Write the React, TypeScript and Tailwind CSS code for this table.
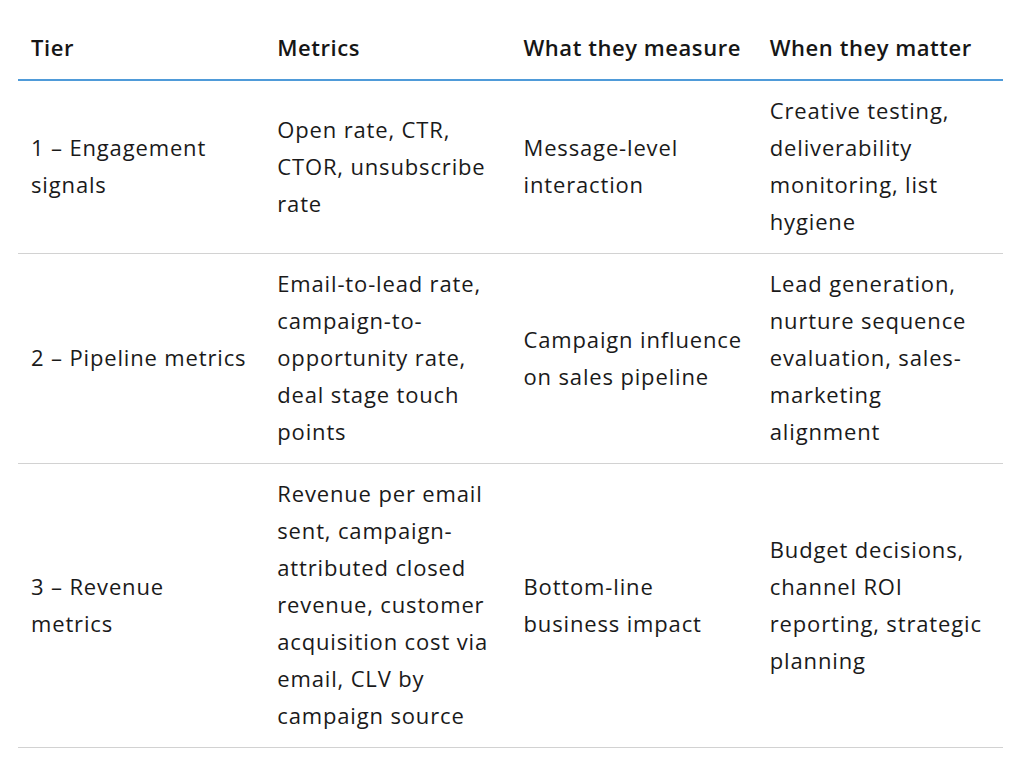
import React from "react";

const rows: { cells: string[][] }[] = [
  {
    cells: [
      ["1 – Engagement", "signals"],
      ["Open rate, CTR,", "CTOR, unsubscribe", "rate"],
      ["Message-level", "interaction"],
      ["Creative testing,", "deliverability", "monitoring, list", "hygiene"],
    ],
  },
  {
    cells: [
      ["2 – Pipeline metrics"],
      ["Email-to-lead rate,", "campaign-to-", "opportunity rate,", "deal stage touch", "points"],
      ["Campaign influence", "on sales pipeline"],
      ["Lead generation,", "nurture sequence", "evaluation, sales-", "marketing", "alignment"],
    ],
  },
  {
    cells: [
      ["3 – Revenue", "metrics"],
      [
        "Revenue per email",
        "sent, campaign-",
        "attributed closed",
        "revenue, customer",
        "acquisition cost via",
        "email, CLV by",
        "campaign source",
      ],
      ["Bottom-line", "business impact"],
      ["Budget decisions,", "channel ROI", "reporting, strategic", "planning"],
    ],
  },
];

const headers = ["Tier", "Metrics", "What they measure", "When they matter"];

export default function App() {
  return (
    <div
      className="w-[1024px] h-[766px] bg-white pt-[18px] px-[18px]"
      style={{ fontFamily: '"Open Sans", "Noto Sans", sans-serif' }}
    >
      <table className="w-[985px] table-fixed border-collapse text-[22px] leading-[37px] text-[#1a1a1a] tracking-[0.85px]">
        <thead>
          <tr className="border-b-2 border-[#4f9bd9]">
            {headers.map((h) => (
              <th
                key={h}
                className="w-1/4 text-left font-semibold text-[#161616] px-[13px] pt-[11px] pb-[13px] whitespace-nowrap tracking-[0.55px]"
              >
                {h}
              </th>
            ))}
          </tr>
        </thead>
        <tbody>
          {rows.map((r, i) => (
            <tr key={i} className="border-b border-[#d2d2d2]">
              {r.cells.map((lines, j) => (
                <td key={j} className="align-middle px-[13px] pt-[11px] pb-[13px]">
                  {lines.map((l, k) => (
                    <div key={k} className="whitespace-nowrap">
                      {l}
                    </div>
                  ))}
                </td>
              ))}
            </tr>
          ))}
        </tbody>
      </table>
    </div>
  );
}
